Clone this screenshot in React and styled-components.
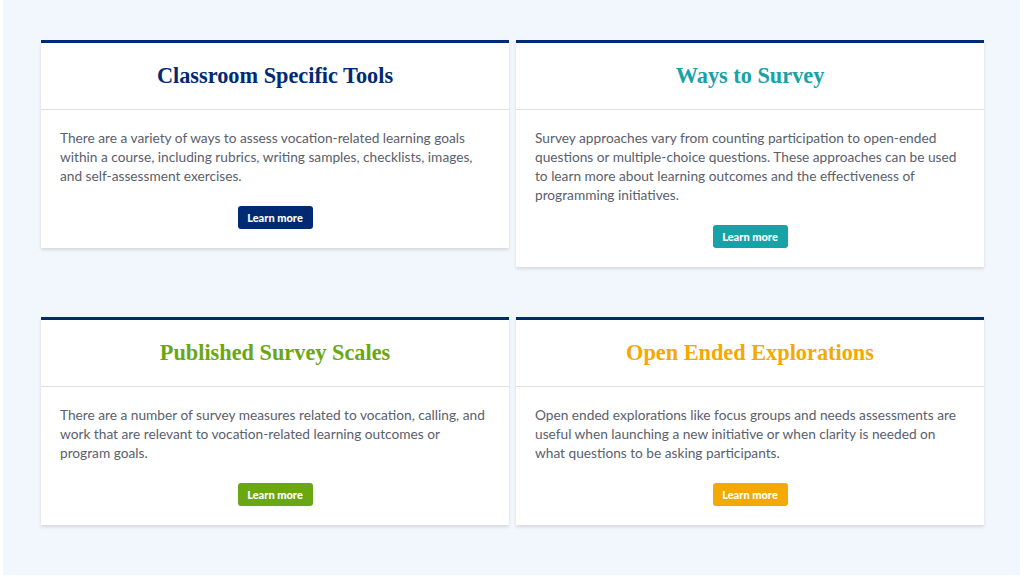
import React from "react";
import styled, { createGlobalStyle } from "styled-components";

const Global = createGlobalStyle`
  html, body { margin: 0; padding: 0; background: #ffffff; }
  body { font-family: "Lato", "Open Sans", sans-serif; }
  * { box-sizing: border-box; }
`;

const Page = styled.main`
  margin: 0 4px 0 3px;
  height: 575px;
  background: #f2f6fd;
  padding: 40px 0 0 38px;
`;

const Grid = styled.div`
  display: grid;
  grid-template-columns: 468px 468px;
  column-gap: 7px;
  row-gap: 50px;
  align-items: start;
`;

const Card = styled.section`
  background: #ffffff;
  border-top: 3px solid #002b72;
  box-shadow: 0 2px 3px rgba(0, 0, 0, 0.12);
`;

const CardHead = styled.header`
  height: 67px;
  display: flex;
  align-items: center;
  justify-content: center;
  border-bottom: 1px solid #dcdfe4;
`;

const Title = styled.h2`
  margin: 0;
  font-family: "Liberation Serif", "Times New Roman", serif;
  font-weight: 700;
  font-size: 22.3px;
  color: ${(p) => p.$color};
`;

const CardBody = styled.div`
  padding: 18px 19px 19px;
  display: flex;
  flex-direction: column;
  align-items: center;
`;

const Text = styled.p`
  margin: 0 0 21px;
  align-self: stretch;
  font-family: "Lato", sans-serif;
  font-size: 13.7px;
  line-height: 19px;
  color: #5a606c;
`;

const Button = styled.a`
  display: inline-flex;
  align-items: center;
  justify-content: center;
  width: 75px;
  height: 23px;
  border-radius: 3px;
  background: ${(p) => p.$color};
  color: #ffffff;
  font-family: "Lato", sans-serif;
  font-weight: 900;
  font-size: 11px;
  text-decoration: none;
`;

const cards = [
  {
    title: "Classroom Specific Tools",
    color: "#002b72",
    text: "There are a variety of ways to assess vocation-related learning goals within a course, including rubrics, writing samples, checklists, images, and self-assessment exercises.",
  },
  {
    title: "Ways to Survey",
    color: "#17a2a7",
    text: "Survey approaches vary from counting participation to open-ended questions or multiple-choice questions. These approaches can be used to learn more about learning outcomes and the effectiveness of programming initiatives.",
  },
  {
    title: "Published Survey Scales",
    color: "#6aa711",
    text: "There are a number of survey measures related to vocation, calling, and work that are relevant to vocation-related learning outcomes or program goals.",
  },
  {
    title: "Open Ended Explorations",
    color: "#f4a900",
    text: "Open ended explorations like focus groups and needs assessments are useful when launching a new initiative or when clarity is needed on what questions to be asking participants.",
  },
];

export default function App() {
  return (
    <>
      <Global />
      <Page>
        <Grid>
          {cards.map((c) => (
            <Card key={c.title}>
              <CardHead>
                <Title $color={c.color}>{c.title}</Title>
              </CardHead>
              <CardBody>
                <Text>{c.text}</Text>
                <Button href="#" $color={c.color}>Learn more</Button>
              </CardBody>
            </Card>
          ))}
        </Grid>
      </Page>
    </>
  );
}
